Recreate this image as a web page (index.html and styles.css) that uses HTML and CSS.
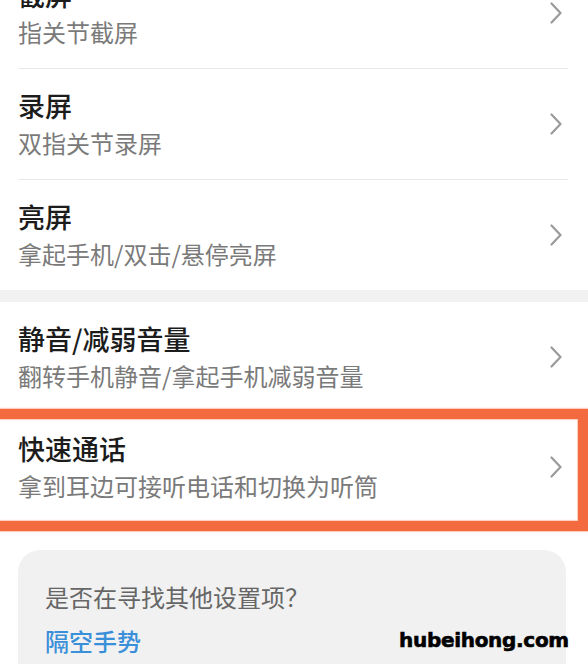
FILE: index.html
```html
<!DOCTYPE html>
<html lang="zh-CN">
<head>
<meta charset="utf-8">
<title>手势设置</title>
<link rel="stylesheet" href="styles.css">
</head>
<body>
<div class="page">
  <div class="group first">
    <div class="row">
      <div class="texts">
        <div class="title">截屏</div>
        <div class="sub">指关节截屏</div>
      </div>
      <svg class="chev" viewBox="0 0 12 22"><polyline points="1.5,1.5 10.5,11 1.5,20.5"/></svg>
    </div>
    <div class="divider"></div>
    <div class="row">
      <div class="texts">
        <div class="title">录屏</div>
        <div class="sub">双指关节录屏</div>
      </div>
      <svg class="chev" viewBox="0 0 12 22"><polyline points="1.5,1.5 10.5,11 1.5,20.5"/></svg>
    </div>
    <div class="divider"></div>
    <div class="row">
      <div class="texts">
        <div class="title">亮屏</div>
        <div class="sub">拿起手机/双击/悬停亮屏</div>
      </div>
      <svg class="chev" viewBox="0 0 12 22"><polyline points="1.5,1.5 10.5,11 1.5,20.5"/></svg>
    </div>
  </div>
  <div class="band"></div>
  <div class="group">
    <div class="row">
      <div class="texts">
        <div class="title">静音/减弱音量</div>
        <div class="sub">翻转手机静音/拿起手机减弱音量</div>
      </div>
      <svg class="chev" viewBox="0 0 12 22"><polyline points="1.5,1.5 10.5,11 1.5,20.5"/></svg>
    </div>
    <div class="row highlighted">
      <div class="texts">
        <div class="title">快速通话</div>
        <div class="sub">拿到耳边可接听电话和切换为听筒</div>
      </div>
      <svg class="chev" viewBox="0 0 12 22"><polyline points="1.5,1.5 10.5,11 1.5,20.5"/></svg>
      <div class="mark"></div>
    </div>
  </div>
  <div class="card">
    <div class="card-q">是否在寻找其他设置项？</div>
    <div class="card-link">隔空手势</div>
  </div>
  <div class="watermark">hubeihong.com</div>
</div>
</body>
</html>
```

FILE: styles.css
```css
html, body {
  margin: 0;
  padding: 0;
  background: #ffffff;
}
body {
  width: 588px;
  height: 664px;
  overflow: hidden;
  font-family: "Noto Sans CJK SC", "Noto Sans", sans-serif;
}
.page {
  position: relative;
  width: 588px;
  height: 664px;
  overflow: hidden;
}
.group.first {
  margin-top: -42px;
}
.row {
  position: relative;
  height: 110px;
  display: flex;
  align-items: center;
  padding: 0 26px 0 18px;
  box-sizing: border-box;
}
.texts {
  flex: 1;
  display: flex;
  flex-direction: column;
}
.title {
  font-size: 27px;
  line-height: 38px;
  font-weight: 500;
  color: #1c1c1c;
}
.sub {
  font-size: 24px;
  line-height: 36px;
  color: #7a7a7a;
}
.chev {
  width: 12px;
  height: 22px;
  fill: none;
  stroke: #9a9a9a;
  stroke-width: 2.2;
  stroke-linecap: round;
  stroke-linejoin: round;
}
.divider {
  height: 1px;
  background: #e9e9e9;
  margin: 0 20px 0 18px;
}
.band {
  height: 12px;
  background: #f2f2f2;
}
.mark {
  position: absolute;
  left: -20px;
  right: 0;
  top: -3px;
  bottom: -9px;
  border: 10px solid #f36a3e;
  box-shadow: 0 0 1px 1px rgba(250, 170, 140, 0.6), inset 0 0 1px 1px rgba(250, 170, 140, 0.6);
}
.card {
  margin: 28px 22px 0 18px;
  background: #f1f1f1;
  border-radius: 22px;
  padding: 29px 27px 40px;
  display: flex;
  flex-direction: column;
  gap: 8px;
}
.card-q {
  font-size: 24px;
  line-height: 36px;
  color: #666666;
}
.card-link {
  font-size: 24px;
  line-height: 36px;
  font-weight: 500;
  color: #3a8fd9;
}
.watermark {
  position: absolute;
  left: 399px;
  top: 626px;
  font-family: "DejaVu Sans", sans-serif;
  font-weight: bold;
  font-size: 20px;
  line-height: 28px;
  color: #000000;
  letter-spacing: -0.3px;
  -webkit-text-stroke: 0.6px #000000;
}
```
